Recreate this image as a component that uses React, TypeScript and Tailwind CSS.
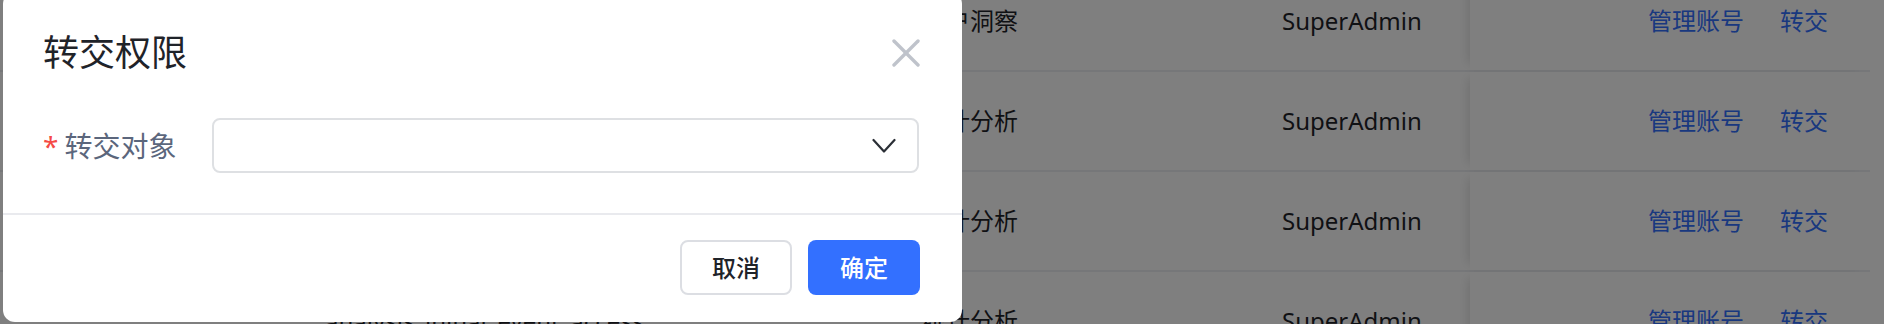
import { useState } from 'react'

interface Row {
  code: string
  module: string
  owner: string
}

const rows: Row[] = [
  { code: 'user_insight_access', module: '用户洞察', owner: 'SuperAdmin' },
  { code: 'analysis_event_access', module: '统计分析', owner: 'SuperAdmin' },
  { code: 'analysis_dashboard_access', module: '统计分析', owner: 'SuperAdmin' },
  { code: 'analysis_initial_event_access', module: '统计分析', owner: 'SuperAdmin' },
]

function CloseIcon() {
  return (
    <svg width="28" height="28" viewBox="0 0 28 28" fill="none" stroke="#bfc3cb" strokeWidth="3.4" strokeLinecap="round">
      <path d="M2 2L26 26" />
      <path d="M26 2L2 26" />
    </svg>
  )
}

function ChevronDown() {
  return (
    <svg width="24" height="16" viewBox="0 0 24 16" fill="none" stroke="#2b2f36" strokeWidth="2.2" strokeLinecap="round" strokeLinejoin="round">
      <path d="M1.5 2L12 13.5L22.5 2" />
    </svg>
  )
}

export default function App() {
  const [target] = useState('')

  return (
    <div className="relative w-full h-[324px] overflow-hidden bg-white font-['Noto_Sans','Noto_Sans_CJK_SC',sans-serif]">
      {/* Background table (scrolled) */}
      <div className="w-[1870px] -mt-[28px]">
        {rows.map((row) => (
          <div key={row.code} className="flex h-[100px] items-center border-b-2 border-[#eceef2] text-[24px] text-[#1f2329]">
            <div className="w-[301px]" />
            <div className="w-[597px] pl-6">{row.code}</div>
            <div className="w-[361px] pl-6">{row.module}</div>
            <div className="w-[211px] pl-[23px]">{row.owner}</div>
            <div className="relative flex h-full w-[400px] items-center justify-end gap-[36px] bg-white pr-[42px] text-[#3370ff] shadow-[-8px_0_10px_-6px_rgba(0,0,0,0.12)]">
              <span>管理账号</span>
              <span>转交</span>
            </div>
          </div>
        ))}
      </div>

      {/* Mask */}
      <div className="absolute inset-0 bg-black/50" />

      {/* Dialog */}
      <div className="absolute left-[3px] top-[-8px] flex h-[330px] w-[959px] flex-col rounded-[12px] bg-white">
        <div className="flex items-center justify-between pl-10 pr-[42px] pt-[43px]">
          <h2 className="text-[36px] leading-[36px] text-[#1f2329]">转交权限</h2>
          <CloseIcon />
        </div>

        <div className="mt-[47px] flex items-center pl-10 pr-[43px]">
          <label className="flex w-[169px] items-center text-[28px] leading-[28px] text-[#5b667c]">
            <span className="mr-[6px] text-[#f54a45]">*</span>
            <span>转交对象</span>
          </label>
          <div className="flex h-[55px] flex-1 items-center justify-between rounded-[8px] border-2 border-[#dee0e3] pl-4 pr-[21px] text-[24px]">
            <span className="text-[#8f959e]">{target}</span>
            <ChevronDown />
          </div>
        </div>

        <div className="mt-[40px] flex justify-end gap-4 border-t-2 border-[#e9eaee] pr-[42px] pt-[25px]">
          <button className="h-[55px] w-[112px] rounded-[8px] border-2 border-[#dcdee3] bg-white text-[24px] font-medium text-[#1f2329]">
            取消
          </button>
          <button className="h-[55px] w-[112px] rounded-[8px] bg-[#3370ff] text-[24px] font-medium text-white">
            确定
          </button>
        </div>
      </div>
    </div>
  )
}
